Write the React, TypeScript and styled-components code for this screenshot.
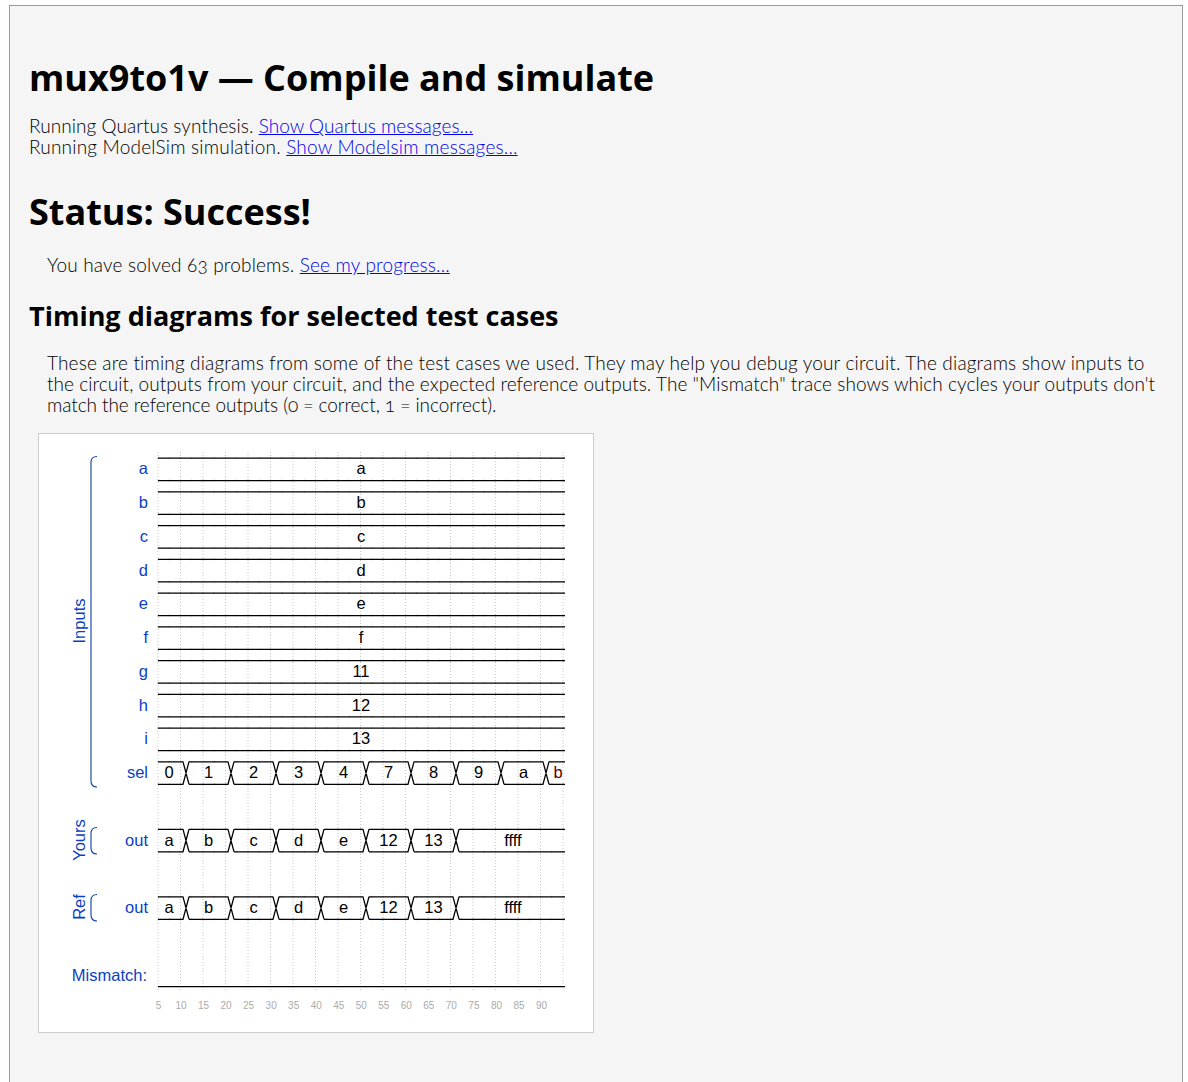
import React from "react";
import styled, { createGlobalStyle } from "styled-components";

const Global = createGlobalStyle`
  html, body { margin: 0; padding: 0; background: #fff; }
  body { padding: 5px 5px 0 9px; height: 1082px; overflow: hidden; box-sizing: border-box; }
`;

const Page = styled.main`
  background: #f5f5f5;
  border: 1px solid #999;
  padding: 0 19px;
  height: 1100px;
  box-sizing: border-box;
  font-family: "Lato", "Liberation Sans", sans-serif;
  font-weight: 300;
  font-size: 19px;
  line-height: 21px;
  font-variant-numeric: oldstyle-nums;
  color: #000;
`;

const Title = styled.h1`
  margin: 0;
  padding-top: 48px;
  font: 700 36px/48px "Open Sans", "Liberation Sans", sans-serif;
  color: #000;
`;

const Log = styled.div`
  margin: 13px 0 0;
`;

const Status = styled.h2`
  margin: 31px 0 0;
  font: 700 36px/48px "Open Sans", "Liberation Sans", sans-serif;
  color: #000;
`;

const Indented = styled.div<{ $top: number }>`
  margin: ${(p) => p.$top}px 0 0 18px;
  white-space: nowrap;
`;

const Line = styled.div<{ $ls: number }>`
  letter-spacing: ${(p) => p.$ls}px;
`;

const Section = styled.h3`
  margin: 21px 0 0;
  font: 700 27px/40px "Open Sans", "Liberation Sans", sans-serif;
  color: #000;
`;

const Link = styled.a`
  color: #0000ee;
  text-decoration: underline;
`;

const Card = styled.figure`
  margin: 18px 0 0 9px;
  width: 556px;
  height: 600px;
  box-sizing: border-box;
  background: #fff;
  border: 1px solid #ccc;
`;

const Diagram = styled.svg`
  display: block;
  width: 554px;
  height: 598px;
`;

const Value = styled.text<{ $fill?: string }>`
  font: 16.5px "Liberation Sans", Arial, sans-serif;
  text-anchor: middle;
  fill: ${(p) => p.$fill ?? "#000"};
`;

const Name = styled.text`
  font: 16.5px "Liberation Sans", Arial, sans-serif;
  text-anchor: end;
  fill: #0b3fc4;
`;

const Group = styled.text`
  font: 16.5px "Liberation Sans", Arial, sans-serif;
  text-anchor: middle;
  fill: #0b3fc4;
`;

const TickNo = styled.text`
  font: 10px "Liberation Sans", Arial, sans-serif;
  text-anchor: middle;
  fill: #aaa;
`;

const Wire = styled.path`
  fill: none;
  stroke: #000;
  stroke-width: 1.25;
`;

const Brace = styled.path`
  fill: none;
  stroke: #0b3fa8;
  stroke-width: 1.1;
`;

const GridLine = styled.line`
  stroke: #c8c8c8;
  stroke-width: 1;
  stroke-dasharray: 1 2;
`;

const Tick = styled.line`
  stroke: #bbb;
  stroke-width: 1;
`;

const X0 = 158;
const X1 = 565;
const TOP0 = 458;
const PITCH = 33.75;
const H = 22.5;
const rowTop = (i: number) => TOP0 + PITCH * i;

const inputs: [string, string][] = [
  ["a", "a"], ["b", "b"], ["c", "c"], ["d", "d"], ["e", "e"],
  ["f", "f"], ["g", "11"], ["h", "12"], ["i", "13"],
];

type Seg = { text: string; x: number; fill?: string };
const cx = [169, 208.5, 253.5, 298.5, 343.5, 388.5, 433.5, 478.5, 523.5, 558];
const crossings = [186, 231, 276, 321, 366, 411, 456, 501, 546];

const selSegs: Seg[] = ["0", "1", "2", "3", "4", "7", "8", "9", "a", "b"].map((text, i) => ({
  text,
  x: cx[i],
  fill: text === "b" ? "#5a0000" : undefined,
}));
const outSegs: Seg[] = ["a", "b", "c", "d", "e", "12", "13"]
  .map((text, i) => ({ text, x: cx[i] }))
  .concat([{ text: "ffff", x: 513 }]);

function Row({ index, label, segs, cross }: { index: number; label: string; segs: Seg[]; cross: number[] }) {
  const t = rowTop(index);
  const b = t + H;
  const mid = Math.round(t + H / 2 + 5.2);
  const s = 3;
  let d = "";
  let prev = X0;
  for (const c of cross) {
    d += `M${prev},${t}H${c - s}L${c + s},${b}M${prev},${b}H${c - s}L${c + s},${t}`;
    prev = c + s;
  }
  d += `M${prev},${t}H${X1}M${prev},${b}H${X1}`;
  const ticks: number[] = [];
  for (let x = X0; x <= X1; x += 11.25) ticks.push(x);
  return (
    <g>
      {ticks.map((x) => (
        <g key={x}>
          <Tick x1={x} x2={x} y1={t - 1} y2={t + 1} />
          <Tick x1={x} x2={x} y1={b - 1} y2={b + 1} />
        </g>
      ))}
      <Wire d={d} />
      <Name x={148} y={mid}>{label}</Name>
      {segs.map((v) => (
        <Value key={v.text + v.x} x={v.x} y={mid} $fill={v.fill}>{v.text}</Value>
      ))}
    </g>
  );
}

const majors = Array.from({ length: 19 }, (_, i) => X0 + 22.5 * i);

function Timing() {
  return (
    <Diagram viewBox="39 434 554 598">
      {majors.map((x) => (
        <GridLine key={x} x1={x} x2={x} y1={452} y2={991} />
      ))}
      {inputs.map(([label, val], i) => (
        <Row key={label} index={i} label={label} segs={[{ text: val, x: 361 }]} cross={[]} />
      ))}
      <Row index={9} label="sel" segs={selSegs} cross={crossings} />
      <Row index={11} label="out" segs={outSegs} cross={crossings.slice(0, 7)} />
      <Row index={13} label="out" segs={outSegs} cross={crossings.slice(0, 7)} />

      <Wire d={`M${X0},986.5H${X1}`} />
      <Name x={147} y={981}>Mismatch:</Name>

      <Brace d="M97,456.5q-6,0 -6,6V781q0,6 6,6" />
      <Brace d="M97,827.5q-6,0 -6,6V848q0,6 6,6" />
      <Brace d="M97,894.5q-6,0 -6,6V915q0,6 6,6" />
      <Group transform="translate(85,621) rotate(-90)">Inputs</Group>
      <Group transform="translate(85,840) rotate(-90)">Yours</Group>
      <Group transform="translate(85,907) rotate(-90)">Ref</Group>

      {Array.from({ length: 18 }, (_, i) => (
        <TickNo key={i} x={X0.valueOf() + 0.5 + 22.53 * i} y={1009}>{(i + 1) * 5}</TickNo>
      ))}
    </Diagram>
  );
}

export default function App() {
  return (
    <Page>
      <Global />
      <Title>mux9to1v — Compile and simulate</Title>
      <Log>
        <Line $ls={0.06}>
          Running Quartus synthesis. <Link href="#">Show Quartus messages...</Link>
        </Line>
        <Line $ls={0.2}>
          Running ModelSim simulation. <Link href="#">Show Modelsim messages...</Link>
        </Line>
      </Log>
      <Status>Status: Success!</Status>
      <Indented $top={18}>
        <Line $ls={0.18}>
          You have solved 63 problems. <Link href="#">See my progress...</Link>
        </Line>
      </Indented>
      <Section>Timing diagrams for selected test cases</Section>
      <Indented $top={16}>
        <Line $ls={0.16}>
          These are timing diagrams from some of the test cases we used. They may help you debug your circuit. The diagrams show inputs to
        </Line>
        <Line $ls={0.055}>
          the circuit, outputs from your circuit, and the expected reference outputs. The "Mismatch" trace shows which cycles your outputs don't
        </Line>
        <Line $ls={-0.07}>match the reference outputs (0 = correct, 1 = incorrect).</Line>
      </Indented>
      <Card>
        <Timing />
      </Card>
    </Page>
  );
}
